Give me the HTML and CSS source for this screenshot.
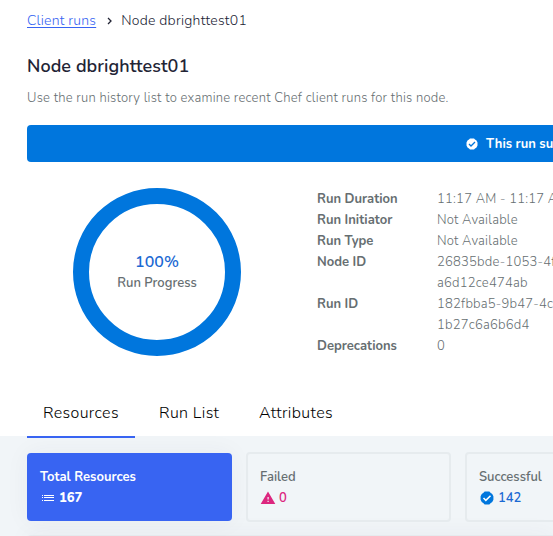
FILE: index.html
```html
<!DOCTYPE html>
<html lang="en">
<head>
<meta charset="utf-8">
<title>Node dbrighttest01</title>
<link rel="stylesheet" href="styles.css">
</head>
<body>
<svg class="defs" width="0" height="0">
  <symbol id="check" viewBox="0 0 24 24"><path fill="currentColor" d="M8 1h8l2 2 3 2 2 4v6l-2 4-3 2-2 2H8l-2-2-3-2-2-4V9l2-4 3-2z"/><path class="tick" fill="none" stroke-width="2.600" d="M6 12l4 4 8-8"/></symbol>
</svg>
<header class="intro">
  <nav class="crumbs"><a href="#">Client runs</a><svg class="chevron" viewBox="0 0 6 8"><path d="M1 1l3 3-3 3"/></svg><span class="here">Node dbrighttest01</span></nav>
  <h1>Node dbrighttest01</h1>
  <p>Use the run history list to examine recent Chef client runs for this node.</p>
</header>
<div class="banner"><svg><use href="#check"/></svg><span>This run succeeded.</span></div>
<section class="summary">
  <div class="ring"><strong class="pct">100%</strong><span>Run Progress</span></div>
  <dl>
    <dt>Run Duration</dt><dd>11:17 AM - 11:17 AM</dd>
    <dt>Run Initiator</dt><dd>Not Available</dd>
    <dt>Run Type</dt><dd>Not Available</dd>
    <dt>Node ID</dt><dd>26835bde-1053-4f<br>a6d12ce474ab</dd>
    <dt>Run ID</dt><dd>182fbba5-9b47-4c0<br>1b27c6a6b6d4</dd>
    <dt>Deprecations</dt><dd>0</dd>
  </dl>
</section>
<nav class="tabs"><a class="active">Resources</a><a>Run List</a><a>Attributes</a></nav>
<main>
  <div class="cards">
    <article class="card total"><h2>Total Resources</h2><div class="count"><svg viewBox="0 0 16 16" shape-rendering="crispEdges"><path fill="currentColor" d="M2 5h1v1H2zM4 5h10v1H4zM2 7h1v1H2zM4 7h10v1H4zM2 10h1v1H2zM4 10h10v1H4z"/></svg><span>167</span></div></article>
    <article class="card failed"><h2>Failed</h2><div class="count"><svg viewBox="0 0 16 16"><path fill="currentColor" fill-rule="evenodd" d="M8 1.500l7.300 12.500H.7zM7.500 7v2.500h1.200v-2.500zM7.500 10.800v1.200h1.200v-1.200z"/></svg><span>0</span></div></article>
    <article class="card success"><h2>Successful</h2><div class="count"><svg><use href="#check"/></svg><span>142</span></div></article>
  </div>
  <div class="panel"></div>
</main>
</body>
</html>
```
FILE: styles.css
```css
* { box-sizing: border-box; }
html { overflow: hidden; }
body { margin: 0; width: 553px; height: 536px; overflow: hidden; background: #fff; color: #666e71; font: 350 14px/21px Nunito, Muli, Lato, "Liberation Sans", sans-serif; white-space: nowrap; }
.defs { position: absolute; }
h1, h2, p, dl, dd { margin: 0; }
.intro { height: 125px; padding: 10px 0 0 27px; }
.crumbs { display: flex; align-items: center; height: 21px; color: #222435; letter-spacing: .24px; }
.crumbs a { color: #3864f2; letter-spacing: .2px; text-underline-offset: 2px; }
.chevron { width: 6px; height: 8px; margin: 0 8px 0 11px; fill: none; stroke: #222435; stroke-width: 1.3; }
h1 { margin-top: 22px; font-size: 18px; line-height: 26px; color: #222435; font-weight: 600; letter-spacing: .06px; }
.intro p { margin-top: 9px; font-size: 13px; letter-spacing: .225px; }
.banner { display: flex; align-items: center; height: 37px; margin-left: 27px; padding: 1px 0 0 439px; border-radius: 4px 0 0 4px; background: #0076dd; color: #fff; font-size: 13px; font-weight: 700; overflow: hidden; }
.banner svg { flex: none; width: 12px; height: 12px; margin-right: 8px; --tick: #0076dd; }
.tick { stroke: var(--tick, #fff); }
.summary { display: flex; height: 226px; overflow: hidden; }
.ring { display: flex; flex: none; flex-direction: column; align-items: center; justify-content: center; width: 168px; height: 168px; margin: 26px 76px 0 73px; padding-top: 2px; border: 16px solid #0076dd; border-radius: 50%; font-size: 13px; font-weight: 600; }
.pct { color: #1b69d3; font-size: 16px; font-weight: 600; }
dl { display: grid; grid-template-columns: 120px 116px; align-content: start; margin-top: 27px; font-size: 13px; }
dt { font-weight: 700; }
dd { font-size: 13px; letter-spacing: .22px; overflow: hidden; }
.tabs { display: flex; height: 48px; padding-left: 27px; color: #000; font-size: 16px; letter-spacing: .35px; }
.tabs a { position: relative; height: 50px; padding: 15px 0 0 16px; }
.tabs a:nth-child(1) { z-index: 1; width: 108px; border-bottom: 2px solid #3864f2; }
.tabs a:nth-child(2) { width: 100px; margin-left: 8px; }
main { height: 100px; padding: 16px 0 0 27px; background: #f1f5f8; overflow: hidden; }
.cards { display: flex; gap: 14px; }
.card { flex: none; width: 205px; height: 70px; padding: 13px 12px; border: 2px solid #e6ebee; border-radius: 4px; font-size: 13px; font-weight: 600; }
.card h2 { font: inherit; line-height: 21px; }
.total { height: 68px; margin-top: 1px; padding: 14px 13px; border: 0; background: #3864f2; color: #fff; box-shadow: 0 0 24px #3c42570d; font-weight: 700; }
.count { display: flex; align-items: center; height: 21px; }
.count svg { width: 16px; height: 16px; margin: -2px 3px 0 0; }
.total .count { font-weight: 800; }
.failed .count { color: #dc267f; }
.success .count { color: #1b69d3; }
.success .count svg { width: 14px; height: 14px; margin: -2px 4px 0 1px; color: #0076dd; }
.panel { height: 20px; margin-top: 13px; border-top: 2px solid #e6ebee; border-left: 2px solid #e6ebee; border-radius: 4px 0 0; box-shadow: 0 0 24px #3c42570d; }
```
